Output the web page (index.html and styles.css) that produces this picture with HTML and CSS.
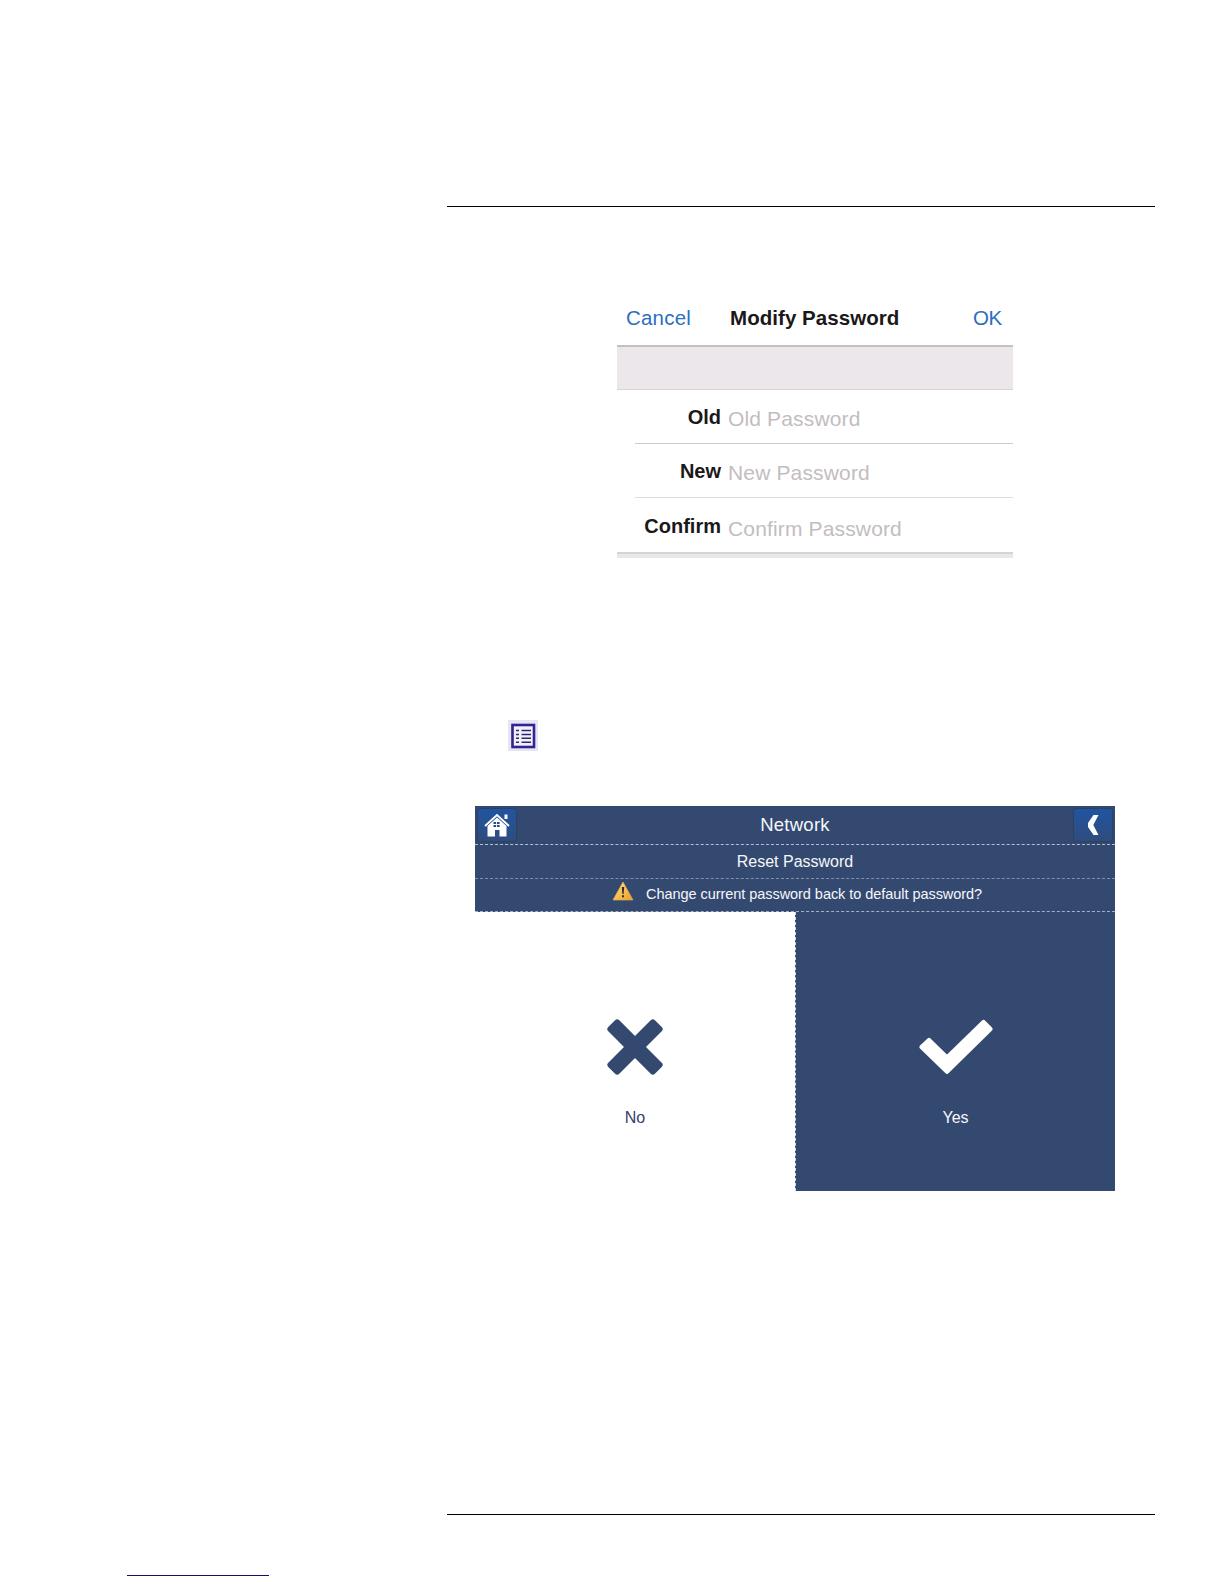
FILE: index.html
```html
<!DOCTYPE html>
<html lang="en">
<head>
<meta charset="utf-8">
<title>Modify Password</title>
<link rel="stylesheet" href="styles.css">
</head>
<body>
<main class="page">
  <hr class="rule">
  <section class="form">
    <header class="form-head">
      <span class="link cancel">Cancel</span>
      <h1 class="form-title">Modify Password</h1>
      <span class="link ok">OK</span>
    </header>
    <div class="band"></div>
    <div class="row"><span class="label">Old</span><span class="hint">Old Password</span></div>
    <div class="row second"><span class="label">New</span><span class="hint">New Password</span></div>
    <div class="row last"><span class="label">Confirm</span><span class="hint">Confirm Password</span></div>
    <div class="form-end"></div>
  </section>
  <svg class="list-icon" width="30" height="31" viewBox="0 0 30 31">
    <rect width="30" height="31" fill="#e6e5f3"/>
    <rect x="4.500" y="5" width="21.500" height="22" fill="#f1f0fc" stroke="#2f2490" stroke-width="2.600"/>
    <path d="M8 10.500h3M8 14.500h3M8 18.300h3M8 22.200h3M13.500 10.500h9.500M13.500 14.500h9.500M13.500 18.300h9.500M13.500 22.200h9.500" stroke="#30266f" stroke-width="1.600"/>
  </svg>
  <section class="panel">
    <header class="bar">
      <span class="button">
        <svg width="38" height="32" viewBox="0 0 38 32">
          <path d="M26.500 5.500h3v4.500h-3z" fill="#fff"/>
          <path d="M7 17L19 6L31 17" fill="none" stroke="#fff" stroke-width="1.800"/>
          <path d="M19 8.500L28.500 17V27.500H21.500V21H17V27.500H9.500V17z" fill="#fff"/>
          <path d="M15.500 13h2.600v2.100h-2.600zM19 13h2.600v2.100H19zM15.500 16h2.600v2.100h-2.600zM19 16h2.600v2.100H19z" fill="#294b85"/>
        </svg>
      </span>
      <h2 class="bar-title">Network</h2>
      <span class="button">
        <svg width="38" height="32" viewBox="0 0 38 32"><path d="M19.500 6H24.500L19.300 16L24.500 26H19.500L14 18V14z" fill="#fff"/></svg>
      </span>
    </header>
    <div class="subtitle">Reset Password</div>
    <div class="question">
      <svg width="22" height="20" viewBox="0 0 22 20">
        <defs><linearGradient id="amber" x1="0" x2="1" y2="1"><stop offset="0" stop-color="#ffe6a0"/><stop offset=".5" stop-color="#f5c254"/><stop offset="1" stop-color="#e89b25"/></linearGradient></defs>
        <path d="M11 1L21 19H1z" fill="url(#amber)" stroke="#eeb24d" stroke-width=".6"/>
        <path d="M9.800 6h2.400l-.6 7h-1.200zM10 14.200h2v2h-2z" fill="#302b2b"/>
      </svg>
      <span class="question-text">Change current password back to default password?</span>
    </div>
    <div class="choices">
      <div class="choice no">
        <svg width="56" height="56" viewBox="-28 -28 56 56" fill="#34496f">
          <rect x="-33" y="-7.800" width="66" height="15.600" rx="3" transform="rotate(45)"/>
          <rect x="-33" y="-7.800" width="66" height="15.600" rx="3" transform="rotate(-45)"/>
        </svg>
        <span>No</span>
      </div>
      <div class="choice yes">
        <svg width="74" height="56" viewBox="0 0 74 56"><path d="M3 28L10 21.500L28 39L64.500 3.500L71 10L28 52.300z" fill="#fff" stroke="#fff" stroke-width="5" stroke-linejoin="round"/></svg>
        <span>Yes</span>
      </div>
    </div>
  </section>
  <hr class="rule bottom">
  <div class="footer-link"></div>
</main>
</body>
</html>
```
FILE: styles.css
```css
* { box-sizing: border-box; }
body { margin: 0; background: #fff; font-family: "Liberation Sans", Arial, sans-serif; }
h1, h2 { margin: 0; font-weight: normal; }
svg { display: block; flex: none; }

.page { height: 1584px; padding: 206px 0 0; overflow: hidden; }
.rule { width: 708px; height: 1px; margin: 0 0 0 447px; border: 0; background: #000; }

.form { width: 396px; margin: 85px 0 0 617px; color: #1b1819; }
.form-head { display: flex; align-items: center; height: 53px; padding: 0 11px 2px 9px; line-height: 24px; }
.link { color: #2c6ec0; font-size: 20.500px; }
.cancel { width: 104px; letter-spacing: .2px; }
.ok { letter-spacing: -.3px; }
.form-title { flex: 1; font-size: 20.500px; font-weight: bold; white-space: nowrap; letter-spacing: .05px; }
.band { height: 45px; background: #ece7ea; border-top: 2px solid #c3bfc2; border-bottom: 1px solid #d9d5d7; }
.row { display: flex; align-items: flex-start; height: 54px; margin-left: 18px; padding-top: 15px; border-bottom: 1px solid #cecbcc; line-height: 24px; }
.second { border-color: #dedbdc; }
.label { width: 86px; text-align: right; font-size: 20px; font-weight: bold; }
.hint { margin: 2px 0 0 7px; font-size: 21px; letter-spacing: .15px; color: #c3bdbf; }
.last { padding-top: 16px; border: 0; }
.last .hint { margin-top: 3px; }
.form-end { height: 6px; background: #e9e7e8; border-top: 2px solid #d5d3d4; }

.list-icon { margin: 162px 0 0 508px; }

.panel { width: 640px; height: 385px; margin: 55px 0 0 475px; background: #34496f; color: #f5f7fb; }
.bar { display: flex; align-items: center; justify-content: space-between; height: 39px; padding: 0 3px; border-bottom: 1px dashed #b4bfd5; }
.button { width: 38px; height: 32px; margin-bottom: 1px; border-radius: 3px; background: linear-gradient(#2055a0, #304c7d); box-shadow: 0 0 1px 1px #304062; }
.bar-title { font-size: 18.500px; letter-spacing: .25px; }
.subtitle { display: flex; align-items: center; justify-content: center; height: 34px; border-bottom: 1px dashed #8190ad; font-size: 16px; }
.question { display: flex; height: 33px; padding: 2px 0 0 137px; border-bottom: 1px dashed #a4b0c8; }
.question-text { margin: 4px 0 0 12px; font-size: 14.500px; line-height: 18px; letter-spacing: -.05px; white-space: nowrap; }
.choices { display: grid; grid-template-columns: 320px 320px; height: 279px; }
.choice { display: flex; flex-direction: column; align-items: center; padding-top: 107px; font-size: 16px; line-height: 20px; }
.choice span { margin-top: 33px; }
.no { background: #fff; color: #34416c; }
.yes { border-left: 1px dashed #d4dae8; }

.bottom { margin-top: 323px; }
.footer-link { width: 142px; height: 1px; margin: 60px 0 0 127px; background: #170e6b; }
```
